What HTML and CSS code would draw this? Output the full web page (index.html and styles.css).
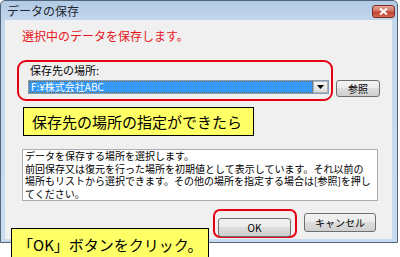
FILE: index.html
```html
<!DOCTYPE html>
<html lang="ja">
<head>
    <meta charset="UTF-8">
    <title>データの保存</title>
    <link rel="stylesheet" href="styles.css">
</head>
<body>
    <div class="window">
        <div class="titlebar">
            <span class="title">データの保存</span>
            <span class="close">
                <svg width="9" height="7" viewBox="0 0 9 7"><path d="M1 0.5 L8 6.5 M8 0.5 L1 6.5" stroke="#fff" stroke-width="2"/></svg>
            </span>
        </div>
        <div class="client">
            <p class="lead">選択中のデータを保存します。</p>
            <div class="location">
                <div class="ring">
                    <div class="label">保存先の場所:</div>
                    <div class="combo">
                        <span class="combo-value">F:¥株式会社ABC</span>
                        <span class="combo-btn">
                            <svg width="7" height="4" viewBox="0 0 7 4"><path d="M0 0 H7 L3.5 4 Z" fill="#000"/></svg>
                        </span>
                    </div>
                </div>
                <button class="btn browse">参照</button>
            </div>
            <div class="callout callout-top">保存先の場所の指定ができたら</div>
            <div class="memo">
                <div class="memo-line">データを保存する場所を選択します。</div>
                <div class="memo-line">前回保存又は復元を行った場所を初期値として表示しています。それ以前の</div>
                <div class="memo-line">場所もリストから選択できます。その他の場所を指定する場合は[参照]を押し</div>
                <div class="memo-line">てください。</div>
            </div>
            <div class="actions">
                <div class="ok-ring"><button class="btn ok">OK</button></div>
                <button class="btn cancel">キャンセル</button>
            </div>
        </div>
    </div>
    <div class="callout callout-bottom">「OK」ボタンをクリック。</div>
</body>
</html>
```

FILE: styles.css
```css
body, html {
    margin: 0;
    padding: 0;
    width: 400px;
    height: 257px;
    overflow: hidden;
    background-color: #fff;
    font-family: "Noto Sans CJK JP", "Liberation Sans", sans-serif;
}

body {
    position: relative;
}

.window {
    box-sizing: border-box;
    width: 398px;
    height: 243px;
    border: 1px solid #50647a;
    border-radius: 5px 5px 0 0;
    padding: 0 5px 3px 4px;
    background: linear-gradient(#b2cae5, #c4d7ed 20px, #c9dbef);
    display: flex;
    flex-direction: column;
}

.titlebar {
    height: 19px;
    display: flex;
    align-items: center;
    justify-content: space-between;
}

.title {
    font-size: 12px;
    line-height: 14px;
    color: #1e2833;
    margin-left: 2px;
}

.close {
    box-sizing: border-box;
    width: 23px;
    height: 13px;
    margin-right: -3px;
    margin-top: 2px;
    border: 1px solid #7a2e26;
    border-radius: 3px;
    background: linear-gradient(#e6a292, #d27565 45%, #c0402f 55%, #d36a52);
    display: flex;
    align-items: center;
    justify-content: center;
}

.client {
    height: 219px;
    background-color: #f0f0f0;
    display: flex;
    flex-direction: column;
}

.lead {
    margin: 9px 0 0 17px;
    font-size: 12px;
    line-height: 14px;
    color: #e8161b;
}

.location {
    display: flex;
    margin: 17px 0 0 12px;
}

.ring {
    box-sizing: border-box;
    width: 316px;
    height: 41px;
    border: 2px solid #e60012;
    border-radius: 9px;
    padding: 2px 0 0 9px;
}

.label {
    font-size: 11px;
    line-height: 13px;
    color: #000;
    margin-left: 2px;
}

.combo {
    box-sizing: border-box;
    width: 301px;
    height: 14px;
    margin-top: 3px;
    border: 1px solid #7f9db9;
    background: #fff;
    display: flex;
}

.combo-value {
    flex: 1;
    background: #3399ff;
    color: #fff;
    font-size: 10px;
    line-height: 12px;
    padding-left: 2px;
    outline: 1px dotted #8a6a3a;
    outline-offset: -1px;
}

.combo-btn {
    box-sizing: border-box;
    width: 15px;
    border: 1px solid #b4b4b4;
    background: linear-gradient(#f4f4f4, #dcdcdc);
    display: flex;
    align-items: center;
    justify-content: center;
}

.btn {
    box-sizing: border-box;
    margin: 0;
    padding: 0;
    height: 19px;
    border: 1px solid #707070;
    border-radius: 3px;
    background: linear-gradient(#f2f2f2, #ebebeb 50%, #dddddd 50%, #cfcfcf);
    font-family: "Noto Sans CJK JP", "Liberation Sans", sans-serif;
    font-size: 10px;
    color: #000;
}

.browse {
    width: 44px;
    height: 17px;
    align-self: flex-end;
    margin: 0 0 4px 3px;
}

.callout {
    box-sizing: border-box;
    border: 1px solid #000;
    background-color: #ffff66;
    color: #000;
    font-size: 15px;
    line-height: 18px;
}

.callout-top {
    width: 231px;
    height: 29px;
    margin: 6px 0 0 18px;
    padding: 5px 0 0 8px;
}

.memo {
    box-sizing: border-box;
    width: 356px;
    height: 52px;
    margin: 13px 0 0 17px;
    padding: 0 2px;
    border: 1px solid #abadb3;
    background: #fff;
    font-size: 10px;
    color: #000;
    white-space: nowrap;
    overflow: hidden;
}

.memo-line {
    height: 12.5px;
    line-height: 12.5px;
}

.actions {
    display: flex;
    align-items: flex-start;
    margin: 8px 0 0 208px;
}

.ok-ring {
    box-sizing: border-box;
    width: 84px;
    height: 29px;
    border: 2px solid #e60012;
    border-radius: 7px;
    padding: 2px 0 0 3px;
}

.ok {
    width: 73px;
}

.cancel {
    width: 72px;
    margin: 4px 0 0 7px;
}

.callout-bottom {
    position: absolute;
    left: 11px;
    top: 228px;
    width: 198px;
    height: 40px;
    padding: 7px 0 0 6px;
}
```
